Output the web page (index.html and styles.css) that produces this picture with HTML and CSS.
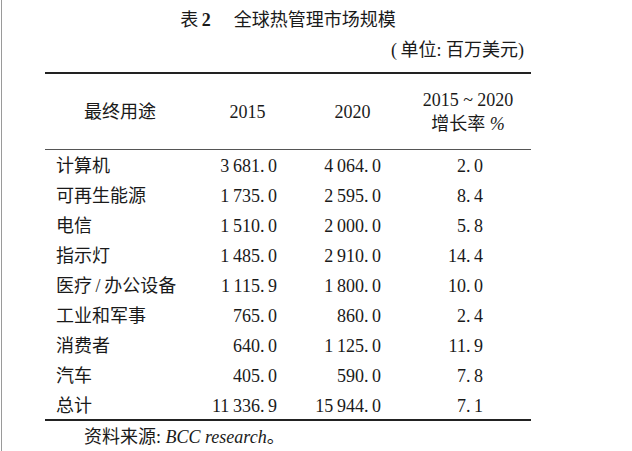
FILE: index.html
```html
<!DOCTYPE html>
<html lang="zh-CN">
<head>
<meta charset="utf-8">
<title>表 2 全球热管理市场规模</title>
<link rel="stylesheet" href="styles.css">
</head>
<body>
<div class="frame">
  <div class="sheet">
    <div class="title">表&#8201;<b class="num-b">2</b><span class="title-text">全球热管理市场规模</span></div>
    <div class="unit">(&#8201;单位: 百万美元)</div>
    <table class="data">
      <colgroup>
        <col class="c1"><col class="c2"><col class="c3"><col class="c4">
      </colgroup>
      <thead>
        <tr>
          <th>最终用途</th>
          <th>2015</th>
          <th>2020</th>
          <th>2015 ~ 2020<br>增长率 <i>%</i></th>
        </tr>
      </thead>
      <tbody>
        <tr><td>计算机</td><td>3&#8201;681.&#8201;0</td><td>4&#8201;064.&#8201;0</td><td>2.&#8201;0</td></tr>
        <tr><td>可再生能源</td><td>1&#8201;735.&#8201;0</td><td>2&#8201;595.&#8201;0</td><td>8.&#8201;4</td></tr>
        <tr><td>电信</td><td>1&#8201;510.&#8201;0</td><td>2&#8201;000.&#8201;0</td><td>5.&#8201;8</td></tr>
        <tr><td>指示灯</td><td>1&#8201;485.&#8201;0</td><td>2&#8201;910.&#8201;0</td><td>14.&#8201;4</td></tr>
        <tr><td>医疗&#8201;/&#8201;办公设备</td><td>1&#8201;115.&#8201;9</td><td>1&#8201;800.&#8201;0</td><td>10.&#8201;0</td></tr>
        <tr><td>工业和军事</td><td>765.&#8201;0</td><td>860.&#8201;0</td><td>2.&#8201;4</td></tr>
        <tr><td>消费者</td><td>640.&#8201;0</td><td>1&#8201;125.&#8201;0</td><td>11.&#8201;9</td></tr>
        <tr><td>汽车</td><td>405.&#8201;0</td><td>590.&#8201;0</td><td>7.&#8201;8</td></tr>
        <tr><td>总计</td><td>11&#8201;336.&#8201;9</td><td>15&#8201;944.&#8201;0</td><td>7.&#8201;1</td></tr>
      </tbody>
    </table>
    <div class="source">资料来源: <i>BCC research</i>。</div>
  </div>
</div>
</body>
</html>
```
FILE: styles.css
```css
html, body {
  margin: 0;
  padding: 0;
  background: #ffffff;
}

body {
  font-family: "Liberation Serif", "Noto Sans CJK SC", serif;
  font-size: 18px;
  color: #1a1a1a;
}

.frame {
  margin-left: 1px;
  border-left: 1px solid #9a9a9a;
  height: 451px;
  box-sizing: border-box;
  overflow: hidden;
}

.sheet {
  width: 486px;
  margin-left: 43px;
  padding-top: 8px;
}

.title {
  text-align: center;
  line-height: 24px;
}

.num-b {
  font-weight: bold;
}

.title-text {
  margin-left: 23px;
}

.unit {
  margin-top: 6px;
  line-height: 24px;
  text-align: right;
  padding-right: 7px;
}

.data {
  margin-top: 10px;
  width: 486px;
  border-collapse: collapse;
  table-layout: fixed;
}

.c1 { width: 150px; }
.c2 { width: 105px; }
.c3 { width: 105px; }
.c4 { width: 126px; }

.data thead tr {
  border-top: 2px solid #222222;
  border-bottom: 1px solid #555555;
}

.data th {
  height: 75px;
  font-weight: normal;
  text-align: center;
  vertical-align: middle;
  line-height: 24px;
  padding: 0;
}

.data tbody tr:last-child {
  border-bottom: 2px solid #222222;
}

.data td {
  height: 28px;
  padding: 2px 0 0;
  line-height: 22px;
  vertical-align: middle;
  text-align: right;
  white-space: nowrap;
}

.data tbody tr:last-child td {
  height: 27px;
}

.data td:first-child {
  text-align: left;
  padding-left: 11px;
}

.data td:nth-child(2) { padding-right: 23px; }
.data td:nth-child(3) { padding-right: 24px; }
.data td:nth-child(4) { padding-right: 48px; }

.source {
  margin-top: 4px;
  padding-left: 39px;
  line-height: 24px;
}
```
